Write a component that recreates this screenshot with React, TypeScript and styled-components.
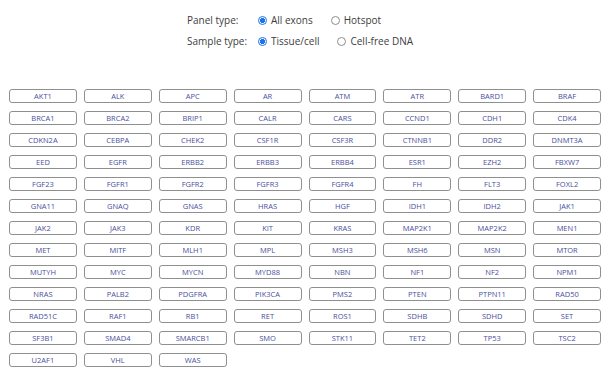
import styled, { createGlobalStyle } from "styled-components";

const GlobalStyle = createGlobalStyle`
  body {
    margin: 0;
    background: #ffffff;
    font-family: "Open Sans", "Liberation Sans", sans-serif;
  }
`;

const GENES = [
  "AKT1", "ALK", "APC", "AR", "ATM", "ATR", "BARD1", "BRAF",
  "BRCA1", "BRCA2", "BRIP1", "CALR", "CARS", "CCND1", "CDH1", "CDK4",
  "CDKN2A", "CEBPA", "CHEK2", "CSF1R", "CSF3R", "CTNNB1", "DDR2", "DNMT3A",
  "EED", "EGFR", "ERBB2", "ERBB3", "ERBB4", "ESR1", "EZH2", "FBXW7",
  "FGF23", "FGFR1", "FGFR2", "FGFR3", "FGFR4", "FH", "FLT3", "FOXL2",
  "GNA11", "GNAQ", "GNAS", "HRAS", "HGF", "IDH1", "IDH2", "JAK1",
  "JAK2", "JAK3", "KDR", "KIT", "KRAS", "MAP2K1", "MAP2K2", "MEN1",
  "MET", "MITF", "MLH1", "MPL", "MSH3", "MSH6", "MSN", "MTOR",
  "MUTYH", "MYC", "MYCN", "MYD88", "NBN", "NF1", "NF2", "NPM1",
  "NRAS", "PALB2", "PDGFRA", "PIK3CA", "PMS2", "PTEN", "PTPN11", "RAD50",
  "RAD51C", "RAF1", "RB1", "RET", "ROS1", "SDHB", "SDHD", "SET",
  "SF3B1", "SMAD4", "SMARCB1", "SMO", "STK11", "TET2", "TP53", "TSC2",
  "U2AF1", "VHL", "WAS",
];

const Page = styled.main`
  display: flex;
  flex-direction: column;
  width: 611px;
`;

const Options = styled.div`
  display: grid;
  grid-template-columns: 71px auto;
  row-gap: 7px;
  margin: 13px 0 0 187px;
  color: #3d3d3d;
  font-size: 10px;
  line-height: 14px;
`;

const Label = styled.span`
  white-space: nowrap;
`;

const Choices = styled.div`
  display: flex;
  align-items: center;
  gap: 18px;
`;

const Choice = styled.label`
  display: flex;
  align-items: center;
  gap: 4px;
  white-space: nowrap;
`;

const Radio = styled.input.attrs({ type: "radio" })`
  appearance: none;
  margin: 0;
  width: 9px;
  height: 9px;
  border-radius: 50%;
  border: 1px solid #8d8d8d;
  background: #ffffff;
  box-sizing: border-box;

  &:checked {
    border-color: #1a73e8;
    background: radial-gradient(circle, #1a73e8 0 2.4px, #ffffff 2.6px);
  }
`;

const GeneGrid = styled.div`
  display: grid;
  grid-template-columns: repeat(8, 1fr);
  column-gap: 7px;
  row-gap: 8px;
  padding: 0 10px 0 9px;
  margin-top: 41px;
`;

const GeneButton = styled.button`
  height: 14px;
  padding: 0;
  border: 1px solid #8f8f8f;
  border-radius: 3px;
  background: #ffffff;
  color: #4a4f9c;
  font-family: "Open Sans", "Liberation Sans", sans-serif;
  font-size: 7.5px;
  line-height: 12px;
  text-align: center;
  cursor: pointer;
`;

const App = () => {
  return (
    <Page>
      <GlobalStyle />
      <Options>
        <Label>Panel type:</Label>
        <Choices>
          <Choice>
            <Radio name="panel" defaultChecked />
            All exons
          </Choice>
          <Choice>
            <Radio name="panel" />
            Hotspot
          </Choice>
        </Choices>
        <Label>Sample type:</Label>
        <Choices>
          <Choice>
            <Radio name="sample" defaultChecked />
            Tissue/cell
          </Choice>
          <Choice>
            <Radio name="sample" />
            Cell-free DNA
          </Choice>
        </Choices>
      </Options>
      <GeneGrid>
        {GENES.map((gene) => (
          <GeneButton key={gene}>{gene}</GeneButton>
        ))}
      </GeneGrid>
    </Page>
  );
};

export default App;
